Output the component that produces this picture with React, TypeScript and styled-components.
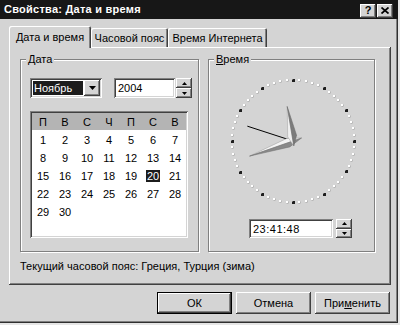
import React from 'react';
import styled, { createGlobalStyle, css } from 'styled-components';

const FACE = '#d4d4d4';

const Global = createGlobalStyle`
  html, body { margin: 0; padding: 0; background: #e6e6e6; }
  body { font-family: "Liberation Sans", Arial, sans-serif; font-size: 11px; color: #000; }
  * { box-sizing: border-box; }
`;

const raised = css`
  box-shadow: inset -1px -1px #404040, inset 1px 1px #fff, inset -2px -2px #808080, inset 2px 2px ${FACE};
`;
const sunken = css`
  box-shadow: inset 1px 1px #808080, inset -1px -1px #fff, inset 2px 2px #404040, inset -2px -2px ${FACE};
`;

const Window = styled.div`
  width: 398px;
  height: 323px;
  background: ${FACE};
  display: flex;
  flex-direction: column;
  box-shadow: inset -1px -1px #303030, inset -2px -2px #808080;
`;

const TitleBar = styled.div`
  height: 19px;
  background: #171717;
  display: flex;
  align-items: center;
  padding: 0 5px 0 4px;
  color: #fff;
  font-weight: bold;
  font-size: 11px;
`;

const TitleText = styled.span`
  flex: 1;
  line-height: 13px;
  letter-spacing: 0.25px;
`;

const CaptionButtons = styled.div`
  display: flex;
  gap: 1px;
  margin-top: 2px;
`;

const CaptionButton = styled.div`
  width: 16px;
  height: 14px;
  background: ${FACE};
  ${raised};
  color: #000;
  display: flex;
  align-items: center;
  justify-content: center;
  font-weight: bold;
  font-size: 11px;
  line-height: 11px;
`;

const Body = styled.div`
  padding: 7px 0 0 9px;
  display: flex;
  flex-direction: column;
`;

const TabStrip = styled.div`
  display: flex;
  align-items: flex-end;
  height: 21px;
  position: relative;
  z-index: 1;
`;

const Tab = styled.div<{ $active?: boolean; $w: number }>`
  width: ${(p) => p.$w}px;
  height: ${(p) => (p.$active ? 22 : 19)}px;
  margin-bottom: ${(p) => (p.$active ? -1 : 0)}px;
  background: ${FACE};
  box-shadow: inset 1px 1px #fff, inset -1px 0 #404040, inset -2px 0 #808080;
  border-radius: 2px 2px 0 0;
  display: flex;
  align-items: center;
  justify-content: center;
  padding-top: ${(p) => (p.$active ? 0 : 1)}px;
  padding-bottom: ${(p) => (p.$active ? 1 : 0)}px;
  white-space: nowrap;
`;

const Panel = styled.div`
  width: 382px;
  height: 238px;
  background: ${FACE};
  ${raised};
  padding: 12px 14px 0 11px;
  display: flex;
  flex-direction: column;
`;

const GroupRow = styled.div`
  display: flex;
  gap: 9px;
`;

const Group = styled.div<{ $w: number }>`
  position: relative;
  width: ${(p) => p.$w}px;
  height: 193px;
  border: 1px solid #808080;
  box-shadow: inset 1px 1px #fff, 1px 1px #fff;
  display: flex;
  flex-direction: column;
`;

const Legend = styled.span`
  position: absolute;
  top: -7px;
  left: 5px;
  padding: 0 2px;
  background: ${FACE};
  line-height: 13px;
`;

const U = styled.span`
  text-decoration: underline;
  text-underline-offset: 1px;
`;

const DateBody = styled.div`
  padding: 18px 0 0 9px;
  display: flex;
  flex-direction: column;
`;

const ControlRow = styled.div`
  display: flex;
  align-items: flex-start;
`;

const Combo = styled.div`
  width: 72px;
  height: 20px;
  background: #fff;
  ${sunken};
  display: flex;
  align-items: center;
  padding: 2px;
`;

const ComboText = styled.span`
  margin-left: 1px;
  width: 50px;
  height: 14px;
  background: #1c1c1c;
  color: #fff;
  line-height: 14px;
  padding-left: 1px;
`;

const DropButton = styled.div`
  margin-left: auto;
  width: 16px;
  height: 16px;
  background: ${FACE};
  ${raised};
  display: flex;
  align-items: center;
  justify-content: center;
`;

const Edit = styled.div<{ $w: number; $h: number; $gap?: number }>`
  width: ${(p) => p.$w}px;
  height: ${(p) => p.$h}px;
  margin-left: ${(p) => p.$gap ?? 0}px;
  background: #fff;
  ${sunken};
  display: flex;
  align-items: center;
  padding-left: 4px;
`;

const Spinner = styled.div<{ $h: number }>`
  width: 16px;
  height: ${(p) => p.$h}px;
  display: flex;
  flex-direction: column;
  margin-left: 1px;
`;

const SpinHalf = styled.div`
  flex: 1;
  background: ${FACE};
  ${raised};
  display: flex;
  align-items: center;
  justify-content: center;
`;

const Calendar = styled.div`
  margin-top: 13px;
  width: 158px;
  height: 127px;
  background: #fff;
  ${sunken};
  padding: 2px;
  display: flex;
  flex-direction: column;
`;

const CalHeader = styled.div`
  height: 17px;
  background: #b4b4b4;
  display: grid;
  grid-template-columns: repeat(7, 22px);
  align-items: center;
  justify-items: center;
`;

const CalGrid = styled.div`
  padding-top: 1px;
  display: grid;
  grid-template-columns: repeat(7, 22px);
  grid-auto-rows: 18px;
  align-items: center;
  justify-items: center;
`;

const Day = styled.span<{ $sel?: boolean }>`
  line-height: 12px;
  padding: 0 1px;
  background: ${(p) => (p.$sel ? '#1c1c1c' : 'transparent')};
  color: ${(p) => (p.$sel ? '#fff' : '#000')};
`;

const TimeBody = styled.div`
  padding-top: 11px;
  display: flex;
  flex-direction: column;
  align-items: center;
`;

const TimeRow = styled.div`
  margin-top: 8px;
  align-self: flex-start;
  padding-left: 40px;
  display: flex;
  gap: 2px;
`;

const TimeText = styled.span`
  letter-spacing: 0.5px;
  font-size: 11px;
`;

const Status = styled.div`
  margin-top: 8px;
  line-height: 13px;
`;

const ButtonRow = styled.div`
  margin-top: 7px;
  display: flex;
  justify-content: flex-end;
  gap: 4px;
  padding-right: 8px;
`;

const PushButton = styled.div<{ $default?: boolean }>`
  width: 75px;
  height: 22px;
  background: ${FACE};
  display: flex;
  align-items: center;
  justify-content: center;
  ${(p) =>
    p.$default
      ? css`
          box-shadow: inset 0 0 0 1px #000, inset -2px -2px #404040, inset 2px 2px #fff, inset -3px -3px #808080;
        `
      : raised};
`;

const Tri = ({ up, size = 3 }: { up?: boolean; size?: number }) => (
  <svg width={size * 2 + 1} height={size + 1} viewBox={`0 0 ${size * 2 + 1} ${size + 1}`}>
    <polygon
      points={up ? `${size + 0.5},0 ${size * 2 + 1},${size + 1} 0,${size + 1}` : `0,0 ${size * 2 + 1},0 ${size + 0.5},${size + 1}`}
      fill="#000"
    />
  </svg>
);

const Spin = ({ h }: { h: number }) => (
  <Spinner $h={h}>
    <SpinHalf>
      <Tri up size={2} />
    </SpinHalf>
    <SpinHalf>
      <Tri size={2} />
    </SpinHalf>
  </Spinner>
);

const CX = 71;
const CY = 70;
const R = 61;

function handPolys(angle: number, len: number, back: number, halfW: number, wPos: number) {
  const a = (angle * Math.PI) / 180;
  const dx = Math.sin(a);
  const dy = -Math.cos(a);
  const px = Math.cos(a);
  const py = Math.sin(a);
  const tip = [CX + dx * len, CY + dy * len];
  const tail = [CX - dx * back, CY - dy * back];
  const s1 = [CX + dx * wPos + px * halfW, CY + dy * wPos + py * halfW];
  const s2 = [CX + dx * wPos - px * halfW, CY + dy * wPos - py * halfW];
  const f = (p: number[]) => `${p[0].toFixed(1)},${p[1].toFixed(1)}`;
  return {
    a: [tip, s1, tail].map(f).join(' '),
    b: [tip, s2, tail].map(f).join(' '),
  };
}

const Clock = () => {
  const dots = [];
  for (let i = 0; i < 60; i++) {
    const a = (i * 6 * Math.PI) / 180;
    const x = Math.round(CX + Math.sin(a) * R);
    const y = Math.round(CY - Math.cos(a) * R);
    if (i % 5 === 0) {
      dots.push(
        <g key={i}>
          <rect x={x - 1} y={y - 1} width={3} height={3} fill="#1e1e1e" />
          <rect x={x - 1} y={y - 1} width={1} height={1} fill="#777" />
        </g>
      );
    } else {
      dots.push(
        <g key={i}>
          <rect x={x - 0.5} y={y - 0.5} width={2} height={2} fill="#9a9a9a" />
          <rect x={x - 1} y={y - 1} width={2} height={2} fill="#fff" />
        </g>
      );
    }
  }
  const hour = handPolys(350.5, 35, 5, 4.5, 5);
  const minute = handPolys(250.8, 46, 9, 4.5, 5);
  const sa = (288 * Math.PI) / 180;
  return (
    <svg width={140} height={140} viewBox="0 0 140 140">
      {dots}
      <line x1={CX} y1={CY} x2={CX + Math.sin(sa) * 48} y2={CY - Math.cos(sa) * 48} stroke="#000" strokeWidth={1} />
      <polygon points={minute.a} fill="#f4f4f4" stroke="#9a9a9a" strokeWidth={0.5} />
      <polygon points={minute.b} fill="#8a8a8a" stroke="#707070" strokeWidth={0.5} />
      <polygon points={hour.b} fill="#f0f0f0" stroke="#a0a0a0" strokeWidth={0.5} />
      <polygon points={hour.a} fill="#7c7c7c" stroke="#686868" strokeWidth={0.5} />
    </svg>
  );
};

const DAYS_HEAD = ['П', 'В', 'С', 'Ч', 'П', 'С', 'В'];

export default function App() {
  const days = Array.from({ length: 30 }, (_, i) => i + 1);
  return (
    <>
      <Global />
      <Window>
        <TitleBar>
          <TitleText>Свойства: Дата и время</TitleText>
          <CaptionButtons>
            <CaptionButton>?</CaptionButton>
            <CaptionButton>
              <svg width="8" height="7" viewBox="0 0 8 7">
                <path d="M0.5 0.5 L7.5 6.5 M7.5 0.5 L0.5 6.5" stroke="#000" strokeWidth={1.7} />
              </svg>
            </CaptionButton>
          </CaptionButtons>
        </TitleBar>
        <Body>
          <TabStrip>
            <Tab $active $w={82}>Дата и время</Tab>
            <Tab $w={77}>Часовой пояс</Tab>
            <Tab $w={99}>Время Интернета</Tab>
          </TabStrip>
          <Panel>
            <GroupRow>
              <Group $w={179}>
                <Legend>
                  <U>Д</U>ата
                </Legend>
                <DateBody>
                  <ControlRow>
                    <Combo>
                      <ComboText>Ноябрь</ComboText>
                      <DropButton>
                        <Tri />
                      </DropButton>
                    </Combo>
                    <Edit $w={61} $h={20} $gap={12}>
                      2004
                    </Edit>
                    <Spin h={20} />
                  </ControlRow>
                  <Calendar>
                    <CalHeader>
                      {DAYS_HEAD.map((d, i) => (
                        <span key={i}>{d}</span>
                      ))}
                    </CalHeader>
                    <CalGrid>
                      {days.map((d) => (
                        <Day key={d} $sel={d === 20}>
                          {d}
                        </Day>
                      ))}
                    </CalGrid>
                  </Calendar>
                </DateBody>
              </Group>
              <Group $w={167}>
                <Legend>
                  <U>В</U>ремя
                </Legend>
                <TimeBody>
                  <Clock />
                  <TimeRow>
                    <Edit $w={84} $h={19}>
                      <TimeText>23:41:48</TimeText>
                    </Edit>
                    <Spin h={19} />
                  </TimeRow>
                </TimeBody>
              </Group>
            </GroupRow>
            <Status>Текущий часовой пояс: Греция, Турция (зима)</Status>
          </Panel>
          <ButtonRow>
            <PushButton $default>ОК</PushButton>
            <PushButton>Отмена</PushButton>
            <PushButton>
              При<U>м</U>енить
            </PushButton>
          </ButtonRow>
        </Body>
      </Window>
    </>
  );
}
